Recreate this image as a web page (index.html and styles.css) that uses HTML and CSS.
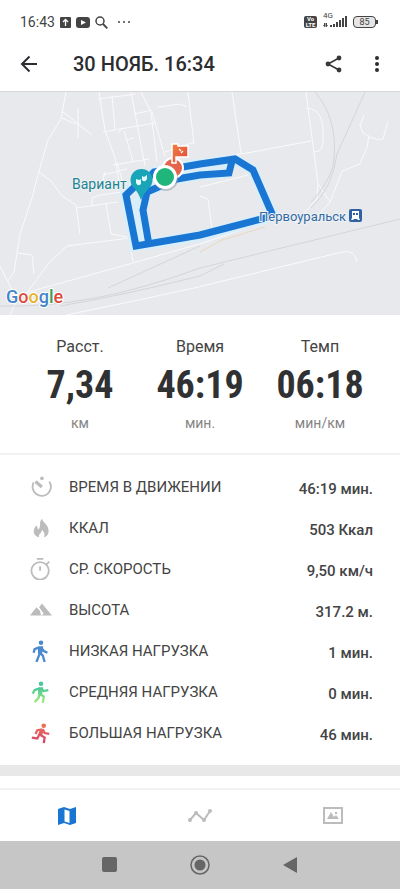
FILE: index.html
```html
<!DOCTYPE html>
<html lang="ru">
<head>
  <meta charset="UTF-8" />
  <meta name="viewport" content="width=device-width, initial-scale=1" />
  <title>30 НОЯБ. 16:34</title>
  <link rel="stylesheet" href="styles.css">
</head>
<body>
  <div class="status-bar">
    <div class="status-left">
      <span class="clock">16:43</span>
      <svg width="11" height="11" viewBox="0 0 11 11"><rect width="11" height="11" rx="1" fill="#444"/><path d="M5.5 9V2.5M3 5l2.5-2.5L8 5" fill="none" stroke="#fff" stroke-width="1.3"/></svg>
      <svg width="14" height="11" viewBox="0 0 14 11"><rect width="14" height="11" rx="3" fill="#444"/><path d="M5 3l5 2.5L5 8z" fill="#fff"/></svg>
      <svg width="13" height="13" viewBox="0 0 13 13" fill="none" stroke="#444"><circle cx="5" cy="5" r="4" stroke-width="1.5"/><path d="M8 8l4.3 4.3" stroke-width="1.8"/></svg>
      <svg class="dots" width="14" height="4" viewBox="0 0 14 4" fill="#444"><circle cx="2" cy="2" r="1"/><circle cx="7" cy="2" r="1"/><circle cx="12" cy="2" r="1"/></svg>
    </div>
    <div class="status-right">
      <span class="volte"><span>Vo</span><span>LTE</span></span>
      <span class="signal">
        <span>4G</span>
        <svg width="24" height="12" viewBox="0 0 24 12" fill="#444"><path d="M0 9h1V7l1.5 0V11H1.5zM3 11V7h1v2h1l-1.5 2zM7 9h2v2H7zM10 8h2v3h-2zM13 6h2v5h-2zM16 4h2v7h-2zM19 2h2v9h-2zM22 0h2v11h-2z"/></svg>
      </span>
      <span class="battery">85</span>
    </div>
  </div>

  <header class="header">
    <button class="icon-btn" aria-label="Назад">
      <svg width="18" height="18" viewBox="0 0 18 18" fill="none" stroke="#2b2d31" stroke-width="2"><path d="M17 9H2M9.5 1.5L2 9l7.5 7.5"/></svg>
    </button>
    <h1>30 НОЯБ. 16:34</h1>
    <button class="icon-btn" aria-label="Поделиться">
      <svg width="18" height="18" viewBox="0 0 18 18" fill="#36383c"><path d="M14 3L3 9l11 6" fill="none" stroke="#36383c" stroke-width="1.6"/><circle cx="14" cy="3" r="2.4"/><circle cx="3" cy="9" r="2.4"/><circle cx="14" cy="15" r="2.4"/></svg>
    </button>
    <button class="icon-btn" aria-label="Меню">
      <svg width="18" height="18" viewBox="0 0 18 18" fill="#2b2d31"><circle cx="9" cy="3" r="2"/><circle cx="9" cy="9" r="2"/><circle cx="9" cy="15" r="2"/></svg>
    </button>
  </header>

  <svg class="map" viewBox="0 0 400 223" preserveAspectRatio="xMidYMid slice" role="img" aria-label="Карта маршрута">
    <defs>
      <linearGradient id="flag" x1="0" y1="0" x2="1" y2="1"><stop offset="0" stop-color="#f0813f"/><stop offset="1" stop-color="#e2483f"/></linearGradient>
    </defs>
    <rect width="400" height="223" fill="#e8e9ed"/>
    <g class="roads">
      <path d="M66 0L61 27 48 48 39 79 32 106 20 142 14 180 8 189M0 174l17 34-7 15M39 80l13 10 10 14 14 9 4 29M62 19l16 13 14 11M78 16v30M62 26l14 6M76 116l42-6M92 114v-8l8-3 22-3M106 112l5 30 16 3M24 205l25-34 18-17 39-5 24-3M17 161l15 2 2 19M129 145l4 25M25 201l108-30 73-21 70-24M66 223l68-14 60-13 148-36q13-3 15 10"/>
      <path d="M99 0l6 38 10 28 4 24M112 4l3 33M98 7l38-5M103 40l52-9M134 22l18-4M131 0l14 74M141 0l10 20 6 50M124 39l9 30M126 48l8-2M122 36l-4 5M113 73l36-6M117 70l10 37M103 83l24-6M158 15l22-3 7 3M188 0l6 52M152 20l13 44M165 60l29-10M105 80l-4 15 26-6M232 0l9 61M153 75l94-14 64-12M306 0l12 92-1 15-22 24M306 16q19 1 17 30 1 14-9 14M318 92l12 18-14 16M330 110l12-31 18-7 7-17 2-11-6-3-3-8 4-10M369 45l10 3 4-1 5-18M200 95l48-12M200 104l8 3 4 30"/>
    </g>
    <g class="rails">
      <path d="M315 0q25 29 18 75-7 20-22 35M365 0L337 62q-5 35-26 54M0 214q90 3 200-38l200-49M60 214q60-10 140-30l24-12M108 196l92-42"/>
      <path d="M200 160l22-12 43-13" stroke="#e6d9bf"/>
    </g>
    <g class="route-halo">
      <path d="M148 82L125 103 135 154 200 144 273 124 253 78 235 68 200 72 154 80 142 92"/>
      <path d="M230 69l-3 12-27 2-23 4-30 13-5 18 6 35"/>
    </g>
    <path d="M133 106l8-4-1 14 3 36-6 1z" fill="#d9eefb"/>
    <g class="route">
      <path d="M148 82L126 103 136 154 200 143 273 124 253 78 235 67 200 72 154 80 142 92"/>
      <path d="M232 69l-3 12-29 2-23 4-30 13-4 18 6 35"/>
    </g>
    <path d="M141 108q-3-8-7-12a11 11 0 1 1 15 0q-5 5-8 12z" fill="#19a4b8"/>
    <path d="M136 87v4q2 4 5 1v-5l-2 1zM142 84l2 1 3-2v4q-2 4-5 1z" fill="#e6fbff"/>
    <circle cx="173" cy="76" r="10" fill="#e4654b" stroke="#fff" stroke-width="2"/>
    <path d="M172 52h6v2h10v11h-12v6h-4z" fill="url(#flag)" stroke="#fff" stroke-width="1.5"/>
    <path d="M179 57l2 2M183 59l-2 2" stroke="#fff" stroke-width="1.2"/>
    <circle cx="166" cy="87" r="12" fill="#9b9fa3" opacity=".5"/>
    <circle cx="165" cy="85" r="10.500" fill="#1fb57b" stroke="#fff" stroke-width="3"/>
    <text class="place teal" x="72" y="97">Вариант</text>
    <text class="place blue" x="259" y="129">Первоуральск</text>
    <rect x="349" y="117" width="13" height="13" rx="2" fill="#2e62a3"/>
    <path d="M352 119h7v7l1 2h-2l-1-1h-3l-1 1h-2l1-2z" fill="#fff"/>
    <path d="M353 121h2v2h-2zM356 121h2v2h-2z" fill="#2e62a3"/>
    <text class="google" x="6" y="211"><tspan fill="#4285c8">G</tspan><tspan fill="#dc4b40">o</tspan><tspan fill="#e8b32c">o</tspan><tspan fill="#4285c8">g</tspan><tspan fill="#3a9d57">l</tspan><tspan fill="#dc4b40">e</tspan></text>
  </svg>

  <main>
    <section class="summary">
      <div class="summary-item">
        <div class="name">Расст.</div>
        <div class="number">7,34</div>
        <div class="unit">км</div>
      </div>
      <div class="summary-item">
        <div class="name">Время</div>
        <div class="number">46:19</div>
        <div class="unit">мин.</div>
      </div>
      <div class="summary-item">
        <div class="name">Темп</div>
        <div class="number">06:18</div>
        <div class="unit">мин/км</div>
      </div>
    </section>

    <ul class="details">
      <li>
        <svg viewBox="0 0 24 24" fill="none" stroke="#bcbcbc" stroke-width="2"><path d="M4 7a10 10 0 1 0 17-1"/><path d="M6 6l7 6" stroke-width="3.5"/><circle cx="13" cy="2.500" r="2" fill="#bcbcbc" stroke="none"/></svg>
        <span class="label">ВРЕМЯ В ДВИЖЕНИИ</span><span class="value">46:19 мин.</span>
      </li>
      <li>
        <svg viewBox="0 0 24 24" fill="#bcbcbc"><path d="M13 2c1 4 6 6 7 11 1 5-1 8-5 9 2-3 0-6-2-8 0 4-4 4-3 8-6-1-7-6-5-10l2-3 2 5c4-4 0-8 4-12z"/></svg>
        <span class="label">ККАЛ</span><span class="value">503 Ккал</span>
      </li>
      <li>
        <svg viewBox="0 0 24 24" fill="none" stroke="#bcbcbc" stroke-width="2"><circle cx="11" cy="14" r="9.500"/><path d="M7.500 1h7M11 9v5M18 7l3-3"/></svg>
        <span class="label">СР. СКОРОСТЬ</span><span class="value">9,50 км/ч</span>
      </li>
      <li>
        <svg viewBox="0 0 24 24" fill="#bcbcbc"><path d="M0 18l7-9 4 4 1 5zM10 9l3-4 11 13H12l3-2z"/></svg>
        <span class="label">ВЫСОТА</span><span class="value">317.2 м.</span>
      </li>
      <li>
        <svg viewBox="0 0 24 24" fill="none" stroke="#4889d0" stroke-width="2.5"><circle cx="12" cy="3" r="2.500" fill="#4889d0" stroke="none"/><path d="M11 8v6l3 3 2 7M11 14l-2 5-2 5M10 8l-5 2-1 4M12 8l3 4 4 2M10 8h3l-1 6h-2z"/></svg>
        <span class="label">НИЗКАЯ НАГРУЗКА</span><span class="value">1 мин.</span>
      </li>
      <li>
        <svg viewBox="0 0 24 24" fill="none" stroke="url(#medium)" stroke-width="2.5"><defs><linearGradient id="medium" gradientUnits="userSpaceOnUse" x1="0" y1="0" x2="0" y2="24"><stop offset=".3" stop-color="#48c79b"/><stop offset="1" stop-color="#a5ed76"/></linearGradient></defs><circle cx="12" cy="3" r="2.500" fill="#48c79b" stroke="none"/><path d="M11 8v6l4 3-1 7M11 14l-2 5-4 4M10 8l-5 2-2 4M12 8l3 3 5-1M10 8h3l-1 6h-2z"/></svg>
        <span class="label">СРЕДНЯЯ НАГРУЗКА</span><span class="value">0 мин.</span>
      </li>
      <li>
        <svg viewBox="0 0 24 24" fill="none" stroke="url(#high)" stroke-width="2.5"><defs><linearGradient id="high" gradientUnits="userSpaceOnUse" x1="0" y1="0" x2="0" y2="24"><stop offset="0" stop-color="#ef7b55"/><stop offset="1" stop-color="#d73e70"/></linearGradient></defs><circle cx="15" cy="4" r="2.500" fill="#ee6f56" stroke="none"/><path d="M13 8l-5 1-2 4M14 8l2 4 5 1M12 9l-2 5-2 4-6-1M11 14l5 3-1 6M13 8l1 1-2 5"/></svg>
        <span class="label">БОЛЬШАЯ НАГРУЗКА</span><span class="value">46 мин.</span>
      </li>
    </ul>
  </main>

  <nav class="tabs">
    <button aria-label="Карта">
      <svg width="20" height="20" viewBox="0 0 20 20" fill="#1976d2"><path d="M1 3l6-2 6 2 6-2v16l-6 2-6-2-6 2zM7.500 3.500v12l5 1.500V5z" fill-rule="evenodd"/></svg>
    </button>
    <button aria-label="График">
      <svg width="24" height="14" viewBox="0 0 24 14" fill="#bcbcbc"><path d="M2 11l6-7 8 7 6-9" fill="none" stroke="#bcbcbc" stroke-width="2"/><circle cx="2" cy="11" r="2"/><circle cx="8" cy="4" r="2"/><circle cx="16" cy="11" r="2"/><circle cx="22" cy="2" r="2"/></svg>
    </button>
    <button aria-label="Фото">
      <svg width="20" height="17" viewBox="0 0 20 17" fill="#bcbcbc"><path d="M1 1h18v15H1z" fill="none" stroke="#bcbcbc" stroke-width="2"/><path d="M4 12l4-7 3 5 2-2 3 4zM12 5h2v2h-2z"/></svg>
    </button>
  </nav>

  <div class="system-nav">
    <button aria-label="Недавние"><svg width="20" height="20" viewBox="0 0 20 20"><rect x="2" y="2" width="15" height="15" rx="2" fill="#666"/></svg></button>
    <button aria-label="Домой"><svg width="20" height="20" viewBox="0 0 20 20"><circle cx="10" cy="10" r="9" fill="none" stroke="#666" stroke-width="1.5"/><circle cx="10" cy="10" r="5.500" fill="#666"/></svg></button>
    <button aria-label="Назад в системе"><svg width="20" height="20" viewBox="0 0 20 20"><path d="M3 10L17 2v16z" fill="#666"/></svg></button>
  </div>
</body>
</html>
```
FILE: styles.css
```css
* {
  box-sizing: border-box;
}
body {
  margin: 0;
  min-height: 100vh;
  display: flex;
  flex-direction: column;
  font-family: Roboto, sans-serif;
  background: #fff;
  color: #444;
}
button {
  padding: 0;
  border: none;
  background: none;
  cursor: pointer;
}
svg {
  display: block;
  flex-shrink: 0;
}
.status-bar {
  height: 36px;
  padding: 8px 24px 0 20px;
  display: flex;
  justify-content: space-between;
  align-items: center;
}
.status-left, .status-right {
  display: flex;
  align-items: center;
  gap: 6px;
}
.status-left {
  gap: 5px;
}
.clock {
  font-size: 14px;
}
.dots {
  margin-left: 4px;
}
.volte {
  width: 13px;
  height: 12px;
  border-radius: 2px;
  background: #444;
  color: #fff;
  font-size: 6px;
  font-weight: 700;
  line-height: 6px;
  text-align: center;
}
.volte span {
  display: block;
}
.signal {
  position: relative;
}
.signal span {
  position: absolute;
  top: -4px;
  left: 0;
  font-size: 8px;
  line-height: 8px;
}
.battery {
  position: relative;
  width: 23px;
  height: 12px;
  border: 1px solid #444;
  border-radius: 4px;
  background: #e6e6e6;
  font-size: 9px;
  line-height: 10px;
  text-align: center;
}
.battery::after {
  content: "";
  position: absolute;
  top: 3px;
  right: -3px;
  width: 2px;
  height: 4px;
  background: #444;
}
.header {
  height: 55px;
  padding: 0 14px 0 20px;
  display: flex;
  align-items: center;
  gap: 25px;
}
.header h1 {
  flex: 1;
  margin: 0 0 0 10px;
  font-size: 20px;
  font-weight: 500;
  color: #2b2d31;
}
.map {
  width: 100%;
  border-top: 1px solid #d8d8da;
}
.roads, .rails, .route, .route-halo {
  fill: none;
}
.roads {
  stroke: #fafafc;
}
.rails {
  stroke: #d4d5d9;
}
.route {
  stroke: #1976d2;
  stroke-width: 7px;
}
.route-halo {
  stroke: #d9eefb;
  stroke-width: 11px;
}
.place {
  font-size: 14px;
  stroke: #edf2f5;
  stroke-width: 2px;
  paint-order: stroke;
}
.teal {
  fill: #22838f;
}
.blue {
  font-size: 13px;
  fill: #356aa3;
}
.google {
  font-size: 18px;
  stroke: #fff;
  stroke-width: 2px;
  paint-order: stroke;
}
.google tspan {
  font-weight: 500;
}
main {
  flex: 1;
  border-bottom: 2px solid #f2f2f2;
}
.summary {
  display: grid;
  grid-template-columns: repeat(3, 1fr);
  padding: 22px 20px 20px;
  border-bottom: 2px solid #f2f2f2;
  text-align: center;
}
.name {
  font-size: 16px;
  line-height: 20px;
}
.number {
  font-family: "Roboto Condensed", Roboto, sans-serif;
  font-size: 38px;
  font-weight: 700;
  line-height: 56px;
  color: #2f3133;
}
.unit {
  font-size: 14px;
  line-height: 20px;
  color: #858585;
}
.details {
  list-style: none;
  margin: 0;
  padding: 11px 27px 12px 30px;
  border-bottom: 11px solid #e8e8e8;
}
.details li {
  height: 41px;
  display: flex;
  align-items: center;
}
.details svg {
  width: 22px;
  height: 22px;
}
.label {
  flex: 1;
  margin-left: 17px;
  font-size: 15px;
}
.value {
  padding-top: 4px;
  font-size: 15px;
  font-weight: 500;
}
.tabs {
  height: 51px;
  display: grid;
  grid-template-columns: repeat(3, 1fr);
}
.tabs button, .system-nav button {
  display: flex;
  align-items: center;
  justify-content: center;
}
.system-nav {
  height: 48px;
  padding: 0 65px;
  display: grid;
  grid-template-columns: repeat(3, 1fr);
  background: #c6c6c6;
}
```
